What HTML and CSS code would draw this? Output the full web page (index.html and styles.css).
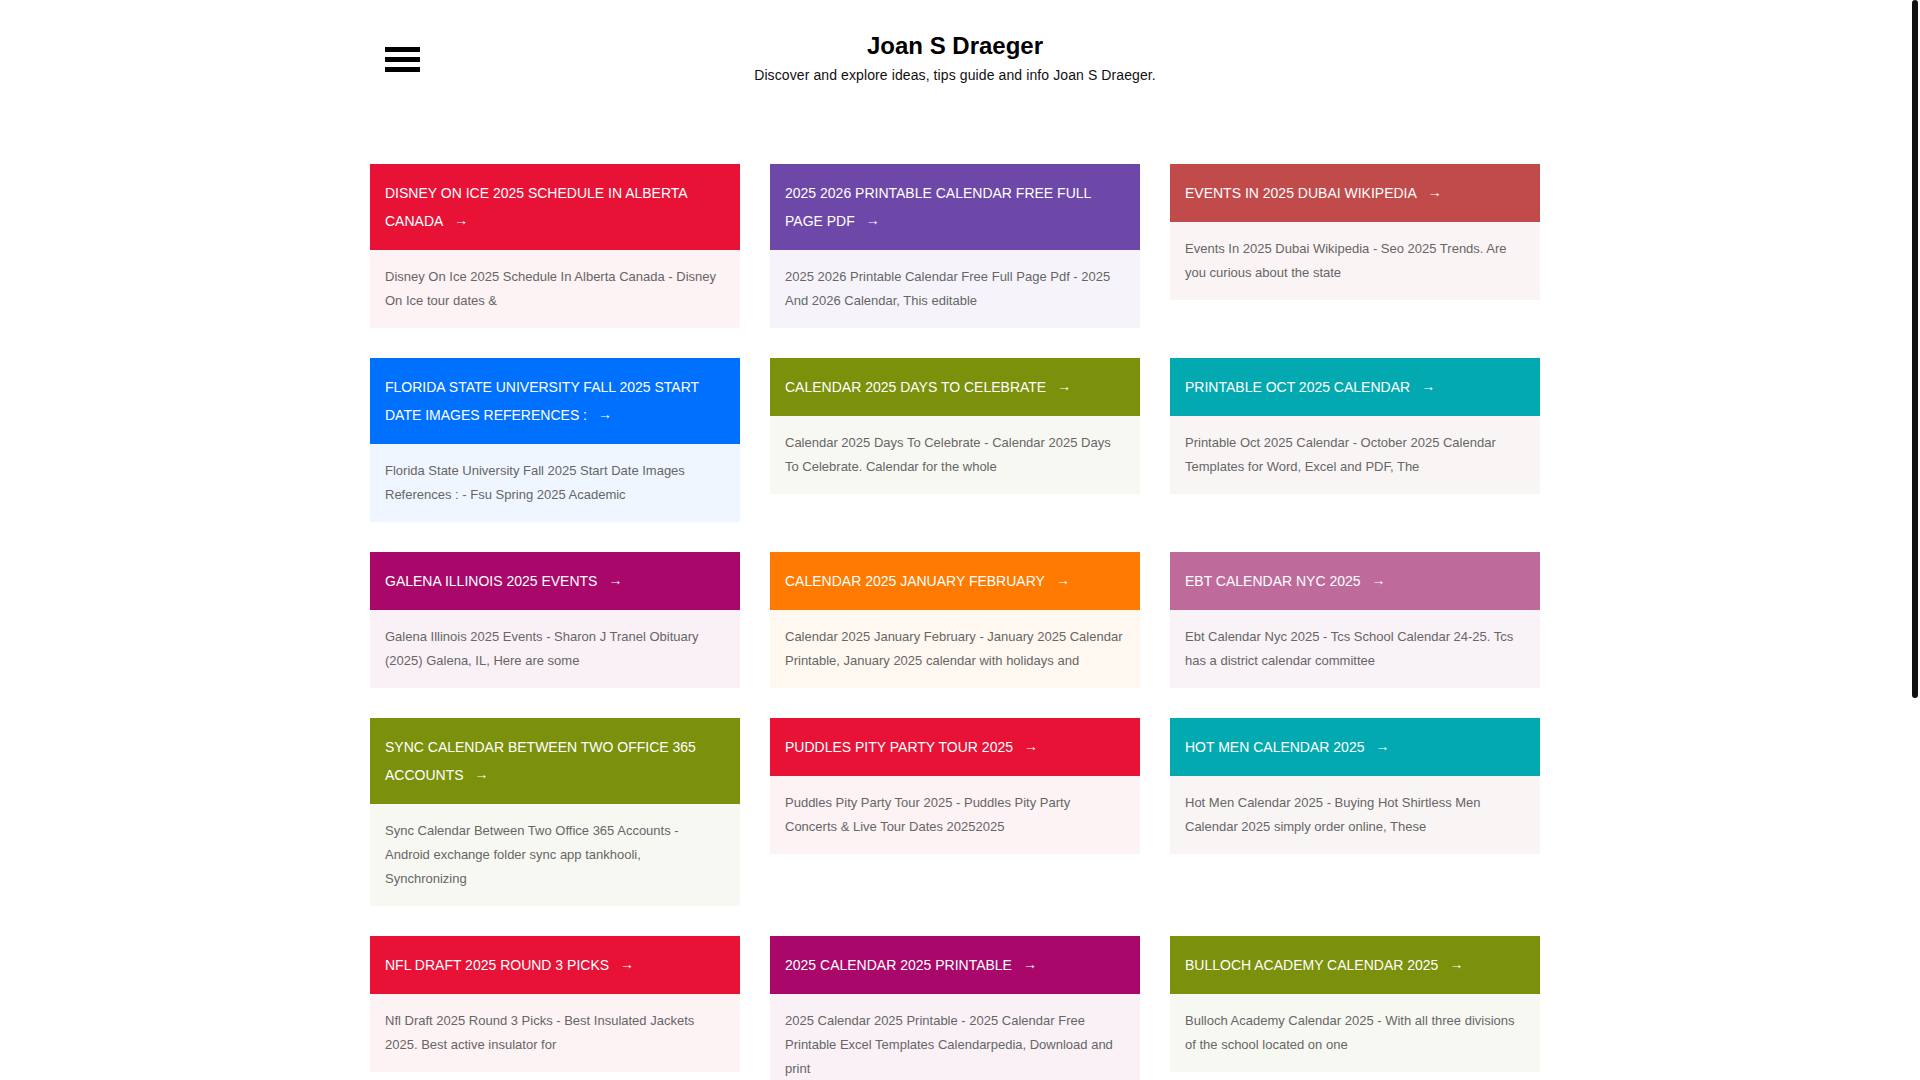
FILE: index.html
```html
<!DOCTYPE html>
<html lang="en">
<head>
  <meta charset="UTF-8" />
  <meta name="viewport" content="width=device-width, initial-scale=1" />
  <title>Joan S Draeger</title>
  <link rel="stylesheet" href="styles.css">
</head>
<body>
  <div class="container">
    <header class="site-header">
      <a href="#" class="menu-toggle" aria-label="Menu">
        <span></span>
        <span></span>
        <span></span>
      </a>
      <div class="brand">
        <h1 class="site-title"><a href="index.html">Joan S Draeger</a></h1>
        <p class="site-desc">Discover and explore ideas, tips guide and info Joan S Draeger.</p>
      </div>
    </header>

    <div class="grid" id="post-container"></div>

    <footer class="site-footer">
      <p>Copyright &copy; 2025 Joan S Draeger. All Rights Reserved.</p>
    </footer>
  </div>

  <!-- scrollbar track -->
  <div class="scroll-track"><div class="scroll-thumb"></div></div>

  <script>
    const posts = [
      { title: "Disney On Ice 2025 Schedule In Alberta Canada", excerpt: "Disney On Ice 2025 Schedule In Alberta Canada - Disney On Ice tour dates &", color: "red" },
      { title: "2025 2026 Printable Calendar Free Full Page Pdf", excerpt: "2025 2026 Printable Calendar Free Full Page Pdf - 2025 And 2026 Calendar, This editable", color: "purple" },
      { title: "Events In 2025 Dubai Wikipedia", excerpt: "Events In 2025 Dubai Wikipedia - Seo 2025 Trends. Are you curious about the state", color: "brick" },
      { title: "Florida State University Fall 2025 Start Date Images References :", excerpt: "Florida State University Fall 2025 Start Date Images References : - Fsu Spring 2025 Academic", color: "blue" },
      { title: "Calendar 2025 Days To Celebrate", excerpt: "Calendar 2025 Days To Celebrate - Calendar 2025 Days To Celebrate. Calendar for the whole", color: "olive" },
      { title: "Printable Oct 2025 Calendar", excerpt: "Printable Oct 2025 Calendar - October 2025 Calendar Templates for Word, Excel and PDF, The", color: "teal" },
      { title: "Galena Illinois 2025 Events", excerpt: "Galena Illinois 2025 Events - Sharon J Tranel Obituary (2025) Galena, IL, Here are some", color: "magenta" },
      { title: "Calendar 2025 January February", excerpt: "Calendar 2025 January February - January 2025 Calendar Printable, January 2025 calendar with holidays and", color: "orange" },
      { title: "Ebt Calendar Nyc 2025", excerpt: "Ebt Calendar Nyc 2025 - Tcs School Calendar 24-25. Tcs has a district calendar committee", color: "mauve" },
      { title: "Sync Calendar Between Two Office 365 Accounts", excerpt: "Sync Calendar Between Two Office 365 Accounts - Android exchange folder sync app tankhooli, Synchronizing", color: "olive" },
      { title: "Puddles Pity Party Tour 2025", excerpt: "Puddles Pity Party Tour 2025 - Puddles Pity Party Concerts & Live Tour Dates 20252025", color: "red" },
      { title: "Hot Men Calendar 2025", excerpt: "Hot Men Calendar 2025 - Buying Hot Shirtless Men Calendar 2025 simply order online, These", color: "teal" },
      { title: "Nfl Draft 2025 Round 3 Picks", excerpt: "Nfl Draft 2025 Round 3 Picks - Best Insulated Jackets 2025. Best active insulator for", color: "red" },
      { title: "2025 Calendar 2025 Printable", excerpt: "2025 Calendar 2025 Printable - 2025 Calendar Free Printable Excel Templates Calendarpedia, Download and print", color: "magenta" },
      { title: "Bulloch Academy Calendar 2025", excerpt: "Bulloch Academy Calendar 2025 - With all three divisions of the school located on one", color: "olive" },
      { title: "Printable Calendar 2025 Monthly", excerpt: "Printable Calendar 2025 Monthly - Free printable monthly calendar templates for the whole year", color: "blue" },
      { title: "Lunar Calendar 2025 Full Moon", excerpt: "Lunar Calendar 2025 Full Moon - Full moon dates and moon phases for every month", color: "purple" },
      { title: "School Holidays 2025 Calendar", excerpt: "School Holidays 2025 Calendar - Term dates and school holiday calendar for the year", color: "orange" }
    ];

    const container = document.getElementById("post-container");

    posts.forEach(post => {
      const card = document.createElement("article");
      card.className = `card ${post.color}`;
      card.innerHTML = `
        <h2 class="card-title"><a href="#">${post.title}<span class="arrow">&rarr;</span></a></h2>
        <div class="card-body">${post.excerpt}</div>
      `;
      container.appendChild(card);
    });
  </script>
</body>
</html>
```

FILE: styles.css
```css
body {
  font-family: "Liberation Sans", Arial, sans-serif;
  margin: 0;
  padding-right: 10px;
  background: #fff;
  color: #111;
}

a {
  color: inherit;
  text-decoration: none;
}

.container {
  width: 1170px;
  margin: 0 auto;
}

/* fake scrollbar (screenshot shows one) */
.scroll-track {
  position: fixed;
  top: 0;
  right: 0;
  width: 8px;
  height: 100%;
  background: #fff;
}

.scroll-thumb {
  width: 6px;
  height: 698px;
  background: #111;
  border-radius: 3px;
}

/* Header */
.site-header {
  display: grid;
  grid-template-columns: 1fr auto 1fr;
  align-items: start;
  padding-top: 31px;
}

.menu-toggle {
  display: flex;
  flex-direction: column;
  gap: 5px;
  width: 35px;
  margin: 16px 0 0 15px;
}

.menu-toggle span {
  display: block;
  height: 5px;
  background: #000;
}

.brand {
  text-align: center;
}

.site-title {
  font-size: 24px;
  line-height: 30px;
  font-weight: bold;
  margin: 0 0 4px;
  color: #000;
}

.site-desc {
  font-size: 14px;
  line-height: 20px;
  letter-spacing: 0.1px;
  margin: 0;
  color: #111;
}

/* Posts */
.grid {
  display: grid;
  grid-template-columns: repeat(3, 1fr);
  gap: 30px;
  align-items: start;
  margin-top: 79px;
}

.card-title {
  margin: 0;
  padding: 15px;
  font-size: 14px;
  line-height: 28px;
  font-weight: normal;
  text-transform: uppercase;
  color: #fff;
}

.arrow {
  display: inline-block;
  margin-left: 11px;
  font-size: 14px;
  line-height: 14px;
  transform: translateY(-1px);
}

.card-body {
  padding: 15px;
  font-size: 13px;
  line-height: 24px;
  color: #666;
}

.red .card-title { background: #e81236; }
.red .card-body { background: #fdf2f4; }

.purple .card-title { background: #6d48a8; }
.purple .card-body { background: #f6f4fa; }

.brick .card-title { background: #c14a4b; }
.brick .card-body { background: #faf4f4; }

.blue .card-title { background: #0070ff; }
.blue .card-body { background: #f0f6ff; }

.olive .card-title { background: #7b900b; }
.olive .card-body { background: #f8f8f3; }

.teal .card-title { background: #03a9b0; }
.teal .card-body { background: #faf5f5; }

.magenta .card-title { background: #a9086a; }
.magenta .card-body { background: #f9f1f6; }

.orange .card-title { background: #ff7a00; }
.orange .card-body { background: #fff8f1; }

.mauve .card-title { background: #be6b9c; }
.mauve .card-body { background: #f9f2f6; }

/* Footer */
.site-footer {
  margin-top: 60px;
  padding: 30px 0 60px;
  text-align: center;
  font-size: 13px;
  color: #666;
}
```
